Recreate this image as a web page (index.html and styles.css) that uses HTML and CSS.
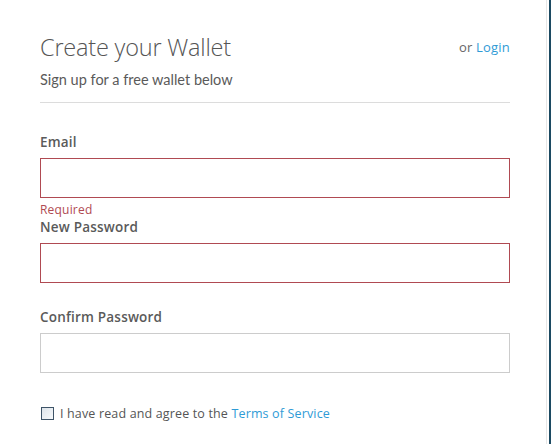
FILE: index.html
```html
<!DOCTYPE html>
<html lang="en">
<head>
<meta charset="utf-8">
<title>Create your Wallet</title>
<link rel="stylesheet" href="styles.css">
</head>
<body>
<div class="page">
  <main class="panel">
    <header class="head">
      <div class="head-row">
        <h1 class="title">Create your Wallet</h1>
        <div class="login">or <a href="#" class="link">Login</a></div>
      </div>
      <p class="subtitle">Sign up for a free wallet below</p>
    </header>
    <form class="form">
      <div class="field">
        <label class="label">Email</label>
        <input class="input input-error" type="email">
        <div class="error">Required</div>
      </div>
      <div class="field">
        <label class="label">New Password</label>
        <input class="input input-error" type="password">
      </div>
      <div class="field field-gap">
        <label class="label">Confirm Password</label>
        <input class="input" type="password">
      </div>
      <div class="agree">
        <span class="checkbox"></span>
        <span class="agree-text">I have read and agree to the <a href="#" class="link">Terms of Service</a></span>
      </div>
    </form>
  </main>
  <div class="edge"></div>
</div>
</body>
</html>
```

FILE: styles.css
```css
html, body {
  margin: 0;
  padding: 0;
  background: #ffffff;
  height: 100%;
}

.page {
  display: flex;
  height: 444px;
  overflow: hidden;
}

.panel {
  flex: 1;
  padding: 31px 36px 0 40px;
  border-right: 1px solid #e6e6e6;
  margin-right: 2px;
}

.edge {
  width: 3px;
  background: #1c4a62;
}

.head {
  width: 470px;
  border-bottom: 1px solid #dcdcdc;
  padding-bottom: 12px;
}

.head-row {
  display: flex;
  justify-content: space-between;
  align-items: flex-start;
}

.title {
  margin: 0;
  font-family: "Open Sans", sans-serif;
  font-weight: 300;
  font-size: 23.5px;
  line-height: 32px;
  color: #555555;
  letter-spacing: -0.2px;
}

.login {
  font-family: "Open Sans", sans-serif;
  font-size: 13px;
  line-height: 18px;
  margin-top: 7px;
  color: #666666;
  letter-spacing: 0.2px;
}

.link {
  color: #2f9bd6;
  text-decoration: none;
}

.subtitle {
  margin: 7px 0 0;
  font-family: "Lato", sans-serif;
  font-weight: 400;
  font-size: 14.5px;
  line-height: 20px;
  color: #5a5a5a;
}

.form {
  width: 470px;
  padding-top: 30px;
}

.field {
  display: flex;
  flex-direction: column;
}

.field-gap {
  margin-top: 25px;
}

.label {
  font-family: "Open Sans", sans-serif;
  font-weight: 600;
  font-size: 13.5px;
  line-height: 18px;
  color: #5a5a5a;
  letter-spacing: 0.2px;
  margin-bottom: 7px;
}

.input {
  box-sizing: border-box;
  width: 470px;
  height: 40px;
  margin: 0;
  border: 1px solid #cccccc;
  background: #ffffff;
  outline: none;
}

.input-error {
  border-color: #b04a52;
}

.error {
  font-family: "Open Sans", sans-serif;
  font-size: 12px;
  line-height: 16px;
  color: #b04a52;
  letter-spacing: 0.2px;
  margin-top: 4px;
}

.agree {
  display: flex;
  align-items: center;
  margin-top: 32px;
  margin-left: 1px;
}

.checkbox {
  box-sizing: border-box;
  width: 13px;
  height: 13px;
  border: 1px solid #3e5468;
  background: linear-gradient(135deg, #dde4ea, #f7f9fb);
  margin-right: 6px;
}

.agree-text {
  font-family: "Open Sans", sans-serif;
  font-size: 12.5px;
  color: #555555;
  letter-spacing: 0.15px;
}
```
